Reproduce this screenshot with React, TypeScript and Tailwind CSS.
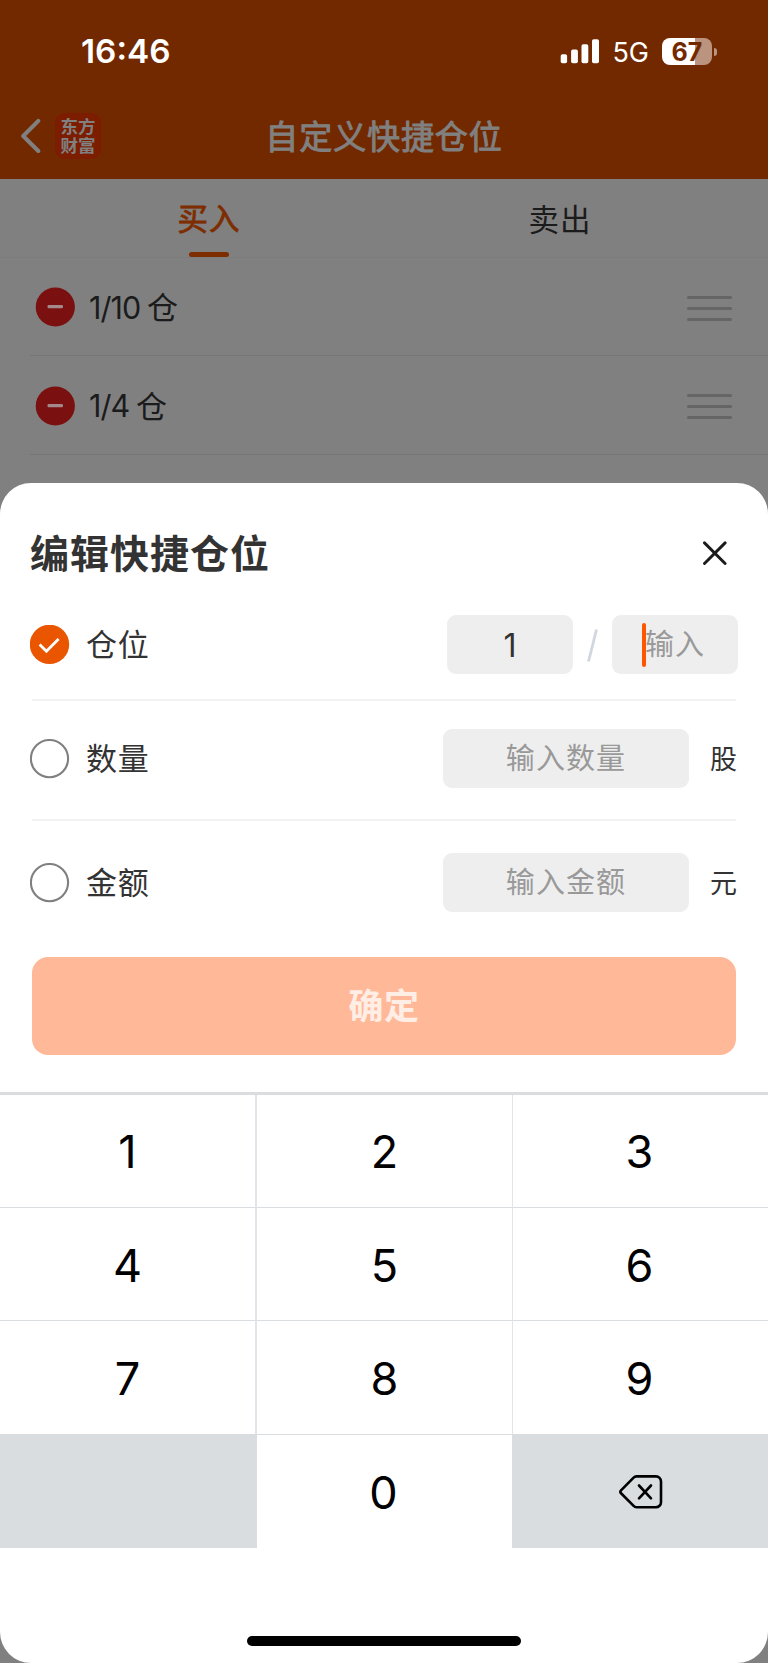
import React from "react";
import clsx from "clsx";

const positions = ["1/10", "1/4"];
const keys = ["1", "2", "3", "4", "5", "6", "7", "8", "9"];

function StatusBar() {
  return (
    <div className="flex h-[103px] items-center justify-between pl-[81px] pr-[51px] text-white">
      <span className="pt-px text-[33.3px] leading-none font-semibold">16:46</span>
      <div className="flex items-center">
        <svg width="40" height="25" viewBox="0 0 40 25" fill="currentColor">
          <rect x="0.7" y="15.2" width="6.4" height="9" rx="1.8" />
          <rect x="11.1" y="10.4" width="6.8" height="13.8" rx="1.8" />
          <rect x="21.5" y="5.2" width="6.8" height="19" rx="1.8" />
          <rect x="32" y="0.2" width="7" height="24" rx="1.8" />
        </svg>
        <span className="ml-[12px] pt-[2px] text-[27px] leading-none">5G</span>
        <div className="ml-[13px] flex h-[27px] w-[50px] items-center justify-center rounded-[8px] bg-linear-to-r from-white from-67% to-[#bb9480] to-67% pt-px text-[25px] leading-none font-bold text-[#732900]">
          67
        </div>
        <span className="ml-[2px] h-[8px] w-[3px] rounded-r-full bg-[#bb9480]" />
      </div>
    </div>
  );
}

function NavBar() {
  return (
    <div className="grid h-[76px] grid-cols-[1fr_auto_1fr] items-center pb-[10px] text-[#808080]">
      <div className="flex items-center pl-[20px]">
        <svg width="22" height="36" viewBox="0 0 22 36" fill="none" stroke="currentColor" strokeWidth="4" strokeLinecap="round" strokeLinejoin="round">
          <path d="M18.3 2.8 3.2 18 18.3 33" />
        </svg>
        <div className="ml-[13px] flex h-[46px] w-[46px] flex-col items-center justify-center rounded-[9px] bg-[#7d1d00] text-[17.5px] leading-[19px] font-bold">
          <span>东方</span>
          <span>财富</span>
        </div>
      </div>
      <h1 className="pt-[2px] text-[33px] leading-none tracking-[0.9px] [-webkit-text-stroke:0.9px]">自定义快捷仓位</h1>
    </div>
  );
}

function Radio({ checked = false }: { checked?: boolean }) {
  return (
    <svg width="40" height="40" viewBox="0 0 40 40" fill="none">
      {checked ? (
        <>
          <circle cx="19.5" cy="19.4" r="19.7" fill="#ea5500" />
          <path d="M9.6 19.6 16.4 26.2 28.6 14" stroke="#fff" strokeWidth="2.8" />
        </>
      ) : (
        <circle cx="19.5" cy="19.6" r="18.6" stroke="#808080" strokeWidth="2.1" />
      )}
    </svg>
  );
}

function AmountRow({ label, unit, className }: { label: string; unit: string; className: string }) {
  return (
    <div className={clsx("flex items-center", className)}>
      <Radio />
      <span className="ml-[16px] text-[31px] leading-none tracking-[0.8px]">{label}</span>
      <div className="ml-auto flex h-[59px] w-[246px] items-center justify-center rounded-[9px] bg-[#eeeeee] pt-px text-[29px] tracking-[1.1px] text-[#999999]">
        输入{label}
      </div>
      <span className="ml-[21px] pt-px text-[27px] leading-none">{unit}</span>
    </div>
  );
}

function Keypad() {
  return (
    <div className="grid grid-cols-[257px_255px_256px] grid-rows-[113px_113px_114px_113px] border-t-[3px] border-[#d9dde0] text-[45px] text-black">
      {keys.map((key, i) => (
        <div
          key={key}
          className={clsx(
            "flex items-center justify-center border-b border-[#d9dde0]",
            i < 3 ? "pt-px" : "pt-[3px]",
            i % 3 === 0 && "border-r-2 border-r-[#e1e4e8]",
            i % 3 === 2 && "border-l border-l-[#e1e4e8] pr-[2px]"
          )}
        >
          {key}
        </div>
      ))}
      <div className="bg-[#d9dde0]" />
      <div className="flex items-center justify-center pt-[3px] pr-[2px]">0</div>
      <div className="flex items-center justify-center bg-[#d9dde0] pt-px pl-[2px]">
        <svg width="44" height="34" viewBox="0 0 44 34" fill="none" stroke="currentColor" strokeWidth="2.6" strokeLinecap="round" strokeLinejoin="round">
          <path d="M17.5 1.4H37a5 5 0 0 1 5 5v20.8a5 5 0 0 1-5 5H17.5a4 4 0 0 1-2.9-1.3L1.8 18a1.6 1.6 0 0 1 0-2.3L14.6 2.7a4 4 0 0 1 2.9-1.3Z" />
          <path d="m20 10.5 12 12.8M32 10.5 20 23.3" />
        </svg>
      </div>
    </div>
  );
}

export default function App() {
  return (
    <div className="flex h-[1663px] w-[768px] flex-col overflow-hidden bg-[#808080] font-[Inter,'Noto_Sans_CJK_SC',sans-serif] text-[#333333]">
      <header className="h-[179px] shrink-0 bg-[#732900]">
        <StatusBar />
        <NavBar />
      </header>

      <div className="flex h-[79px] shrink-0 border-b border-[#7c7c7c] text-[30.5px] tracking-[1px]">
        <div className="flex w-[418px] flex-col items-center">
          <span className="flex h-[73px] items-center pt-[8px] text-[#7d2d00] [-webkit-text-stroke:0.8px]">买入</span>
          <span className="h-[5.5px] w-[40px] rounded-full bg-[#7d2d00]" />
        </div>
        <div className="flex h-[73px] w-[284px] items-center justify-center pt-[8px] text-[#1b1b1b]">卖出</div>
      </div>

      <div className="h-[225px] shrink-0 pl-[30px]">
        {positions.map((position) => (
          <div key={position} className="flex h-[98.4px] items-center border-b border-[#767676] pt-px pr-[36px] pl-[5px] text-[#1b1b1b]">
            <svg width="40" height="40" viewBox="0 0 40 40">
              <circle cx="20.3" cy="20" r="19.6" fill="#7b1010" />
              <rect x="12.5" y="18.1" width="15.5" height="3.2" rx="1.2" fill="#a3898b" />
            </svg>
            <span className="ml-[14px] pt-[2px] text-[30.5px] leading-none tracking-[-0.9px]">{position}</span>
            <span className="ml-[6.5px] pt-px text-[31px] leading-none">仓</span>
            <div className="ml-auto flex w-[45px] flex-col gap-[8px] pt-[2px]">
              <span className="h-[3px] rounded-full bg-[#656565]" />
              <span className="h-[3px] rounded-full bg-[#656565]" />
              <span className="h-[3px] rounded-full bg-[#656565]" />
            </div>
          </div>
        ))}
      </div>

      <section className="flex h-[1180px] shrink-0 flex-col rounded-[31px] bg-white">
        <div className="px-[32px]">
          <div className="flex h-[132px] items-center justify-between pt-[8px] pr-[9px]">
            <h2 className="-ml-[2px] text-[39px] leading-none font-bold tracking-[1px]">编辑快捷仓位</h2>
            <svg width="24" height="24" viewBox="0 0 24 24" fill="none" stroke="#1b1b1b" strokeWidth="2.9" strokeLinecap="round">
              <path d="m1.5 1.9 20.6 20.6M22.1 1.9 1.5 22.5" />
            </svg>
          </div>

          <div className="-mx-[2px] flex h-[59px] items-center">
            <Radio checked />
            <span className="ml-[16px] text-[31px] leading-none tracking-[0.8px]">仓位</span>
            <div className="ml-auto flex h-[59px] w-[126px] items-center justify-center rounded-[9px] bg-[#eeeeee] pt-[2px] text-[32px]">1</div>
            <svg className="mx-[14px]" width="11" height="34" viewBox="0 0 11 34" stroke="#d2d6df" strokeWidth="2.8">
              <path d="M1.5 33.5 9.5 1.5" />
            </svg>
            <div className="flex h-[59px] w-[126px] items-center rounded-[9px] bg-[#eeeeee] pl-[30px] text-[29px] tracking-[1.1px] text-[#999999]">
              <span className="h-[44px] w-[4px] shrink-0 rounded-full bg-[#ff5500]" />
              <span className="-ml-px">输入</span>
            </div>
          </div>

          <div className="mt-[25px] h-[2px] bg-[#f3f3f3]" />
          <AmountRow label="数量" unit="股" className="-mr-px -ml-[2px] h-[118px] pb-[3px]" />
          <div className="h-[2px] bg-[#f3f3f3]" />
          <AmountRow label="金额" unit="元" className="-mr-px -ml-[2px] h-[123px]" />

          <button className="mt-[13px] flex h-[98px] w-full items-center justify-center rounded-[16px] bg-[#ffb999] pt-px text-[35px] font-bold tracking-[0.6px] text-[#ffeee6]">
            确定
          </button>
        </div>

        <div className="mt-[37px]">
          <Keypad />
        </div>
        <div className="mx-auto mt-auto mb-[17px] h-[10px] w-[274px] rounded-full bg-black" />
      </section>
    </div>
  );
}
